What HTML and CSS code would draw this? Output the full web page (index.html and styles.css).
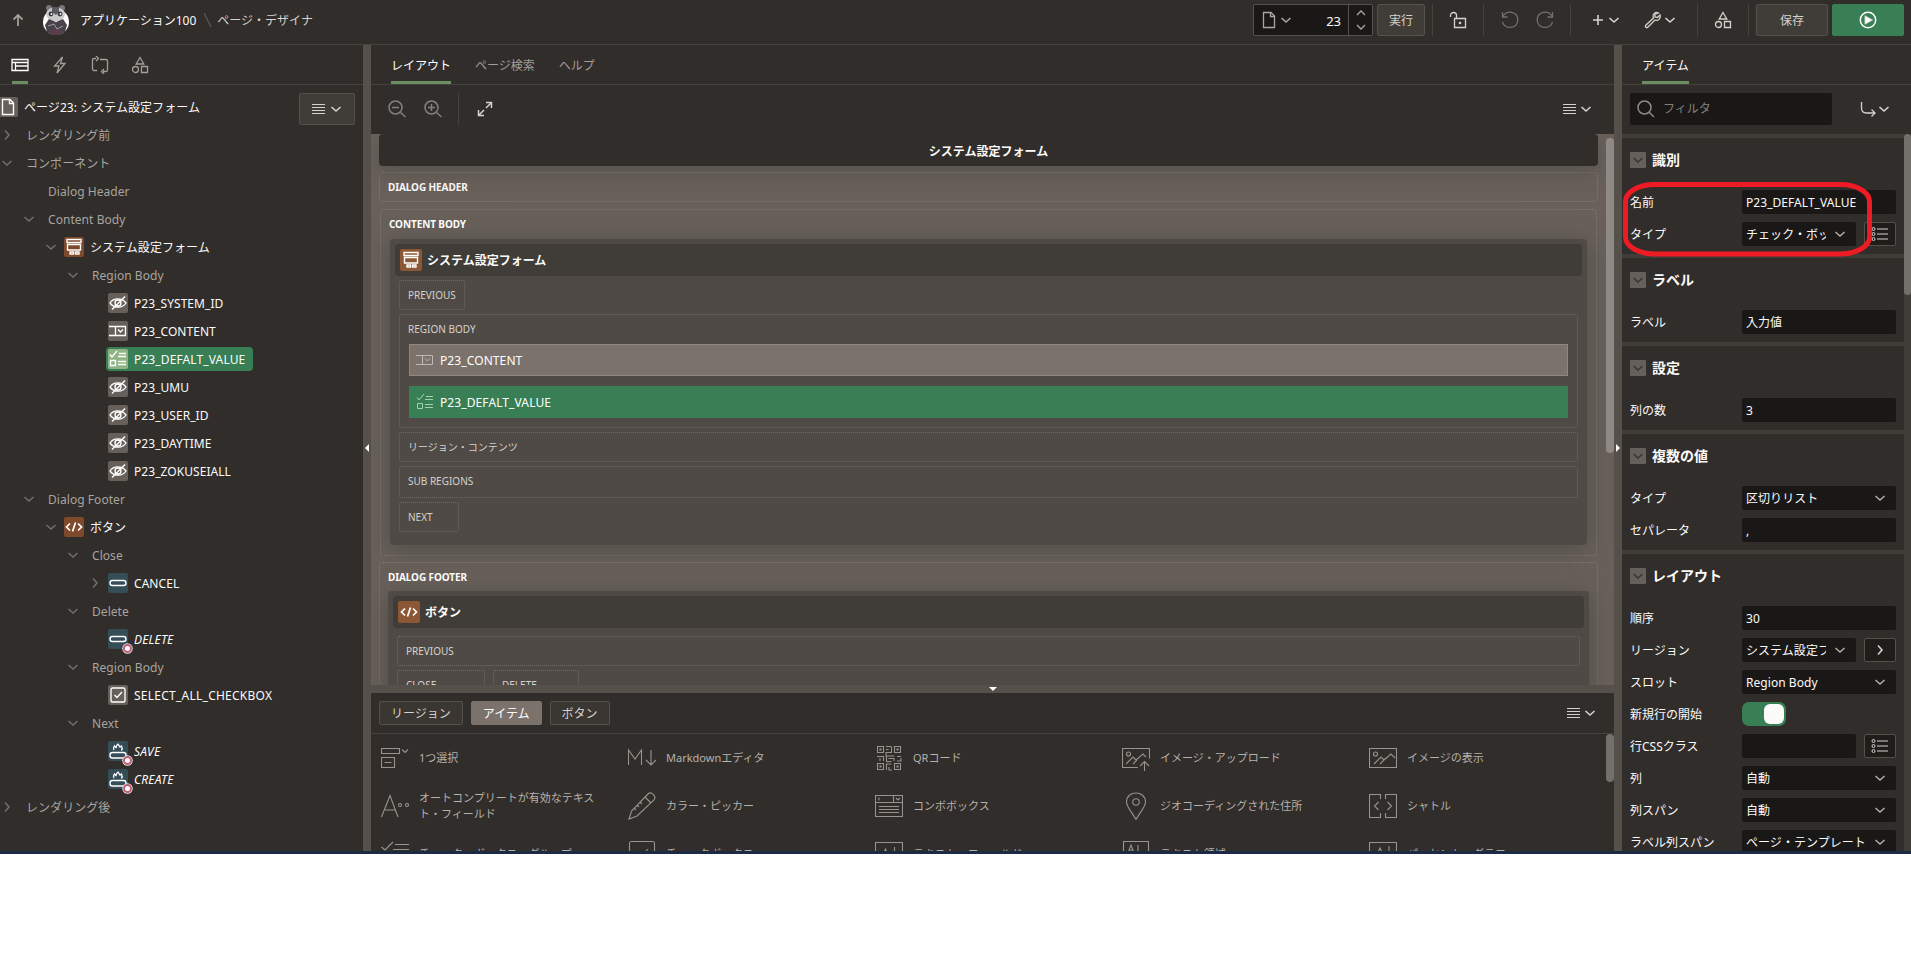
FILE: index.html
```html
<!DOCTYPE html>
<html lang="ja">
<head>
<meta charset="utf-8">
<title>ページ・デザイナ</title>
<link rel="stylesheet" href="styles.css">
</head>
<body>
<svg class="defs" width="0" height="0">
  <symbol id="chev" viewBox="0 0 12 12"><path d="M1.500 4 6 8l4.500-4"/></symbol>
  <symbol id="chevr" viewBox="0 0 12 12"><path d="M4 1.500 8 6l-4 4.500"/></symbol>
  <symbol id="menu" viewBox="0 0 14 12"><path d="M0 1.500h13M0 4.500h13M0 7.500h13M0 10.500h13"/></symbol>
  <symbol id="shapes" viewBox="0 0 18 18"><path d="M9 1.500 12.800 8H5.200zM10.500 10.500h6v6h-6z"/><circle cx="4.500" cy="13.500" r="3"/></symbol>
  <symbol id="page" viewBox="0 0 14 18"><path d="M1.500 1.500h7.500l3.500 3.500v11.500h-11zM8.500 1.500v4h4"/></symbol>
  <symbol id="form" viewBox="0 0 18 18"><path d="M2 1.500h14v3H2zM2.500 6.500h13v5.500h-13zM5 14h3.500v2H5zM10.500 14H14v2h-3.500z"/></symbol>
  <symbol id="hide" viewBox="0 0 18 18"><path d="M1 9c3.500-5.500 12-5.500 16 0-3.500 5.500-12 5.500-16 0zM3 15.500 16 2.500"/><circle cx="9" cy="9" r="3"/></symbol>
  <symbol id="select" viewBox="0 0 18 18"><path d="M0 4.500h16.500v9H0M6.500 4.500v9M9 7.500l2.500 2.500 2.500-2.500"/></symbol>
  <symbol id="checks" viewBox="0 0 18 18"><path d="M1 4.500l2 2.500 5-6M10 3.500h7M9 6.500h8M1.500 10.500h5v5h-5zM9 11.500h8M9 14.500h8"/></symbol>
  <symbol id="code" viewBox="0 0 18 18"><path d="M5 5.500 1.500 9 5 12.500M13 5.500 16.500 9 13 12.500M10.500 4.500 7.500 13.500"/></symbol>
  <symbol id="btn" viewBox="0 0 18 18"><rect x="1" y="6.500" width="16" height="5" rx="2.500"/></symbol>
  <symbol id="hot" viewBox="0 0 18 18"><rect x="1" y="10.500" width="16" height="5.500" rx="2.500"/><path d="M5 8c-1.500-2 0-3 .5-4l1.500 1.500C7.500 4 8 2.500 9 2l2 3 1.500-1c1 2 1 3 0 4.500"/></symbol>
  <symbol id="cbox" viewBox="0 0 18 18"><rect x="2" y="2" width="14" height="14" rx="1.500"/><path d="M5.500 9l2.500 2.500 5-5.500"/></symbol>
  <symbol id="list" viewBox="0 0 18 16"><path d="M6 3h11M6 8h11M6 13h11"/><circle cx="2.500" cy="3" r="1.500"/><circle cx="2.500" cy="8" r="1.500"/><circle cx="2.500" cy="13" r="1.500"/></symbol>
  <symbol id="pic" viewBox="0 0 28 28"><path d="M.5 4.500h27v19H.5zM5 20l7-7 3 3 7-6 4 4M11 20l6-6"/><circle cx="6.500" cy="10" r="2"/></symbol>
</svg>
<div class="app">
  <header class="topbar">
    <svg class="i up" viewBox="0 0 12 14"><path d="M6 13V2M1.500 6.500 6 2l4.500 4.500"/></svg>
    <svg class="avatar" viewBox="0 0 28 32"><circle cx="14" cy="18" r="13" fill="#fff"/><circle cx="7" cy="4" r="3" fill="#77747a"/><circle cx="20" cy="4" r="3" fill="#77747a"/><path d="M4 10C5 1 22 1 23 10c-1 5-4 7-9 7s-9-2-10-7z" fill="#c9c8cb"/><path d="M10 3h7v5l-3 3-4-3z" fill="#5c595f"/><circle cx="9" cy="10" r="2.400" fill="#3c393f"/><circle cx="18" cy="10" r="2.400" fill="#3c393f"/><circle cx="9.500" cy="10" r=".9" fill="#fff"/><circle cx="18.500" cy="10" r=".9" fill="#fff"/><path d="M7 15l7 3 7-3 4 6-2 7-5 3h-8l-5-3-2-7z" fill="#48434a"/><path d="M9 26h11l-1 4h-9z" fill="#5d3d49"/><path d="M6 22l6-2 3 5 6-3" fill="none" stroke="#a19da4"/></svg>
    <span class="crumb">アプリケーション100</span><svg class="slash" viewBox="0 0 9 16"><path d="M1 1l7 14"/></svg><span class="crumb dim">ページ・デザイナ</span>
    <div class="tools">
      <div class="pagesel"><svg class="i w14" viewBox="0 0 14 18"><use href="#page"/></svg><svg class="i c12" viewBox="0 0 12 12"><use href="#chev"/></svg><b>23</b><span class="spin"><svg class="i" viewBox="0 0 12 12"><path d="M2 8l4-4 4 4"/></svg><svg class="i" viewBox="0 0 12 12"><path d="M2 4l4 4 4-4"/></svg></span></div>
      <div class="tbtn run">実行</div>
      <i class="vs"></i>
      <div class="slot lock"><svg class="i s18" viewBox="0 0 18 18"><path d="M1.500 6V4.500c0-4 6-4 6 0V7M5.500 7.500h11v9h-11z"/><path d="M10.500 11.500h1v1h-1z"/></svg></div>
      <i class="vs"></i>
      <div class="slot undo"><svg class="i s18" viewBox="0 0 18 18"><path d="M1.500 1v5h5M1.800 5.500C6-2 17 1 16.800 9.300 16 18.500 3.500 18.500 1.500 11"/></svg><svg class="i s18 flip" viewBox="0 0 18 18"><path d="M1.500 1v5h5M1.800 5.500C6-2 17 1 16.800 9.300 16 18.500 3.500 18.500 1.500 11"/></svg></div>
      <i class="vs"></i>
      <div class="slot menus"><svg class="i plus" viewBox="0 0 12 12"><path d="M6 1v10M1 6h10"/></svg><svg class="i c12" viewBox="0 0 12 12"><use href="#chev"/></svg><svg class="i s18 wrench" viewBox="0 0 18 18"><path d="M14.500 2C11 0 8 4 9.500 7L2 14c-1.500 2 .5 3.500 2 2l7-7c3 1.500 6-1.500 5-5l-2.500 2.500-2.500-.5V3.500z"/></svg><svg class="i c12" viewBox="0 0 12 12"><use href="#chev"/></svg></div>
      <i class="vs"></i>
      <div class="slot shp"><svg class="i s18" viewBox="0 0 18 18"><use href="#shapes"/></svg></div>
      <i class="vs"></i>
      <div class="tbtn save">保存</div>
      <div class="tbtn go"><svg viewBox="0 0 18 18"><circle cx="9" cy="9" r="7.700" fill="none" stroke="#fff" stroke-width="1.500"/><path d="M6 4.800 13.500 9 6 13.200z" fill="#fff"/></svg></div>
    </div>
  </header>
  <div class="body">
    <aside class="left">
      <nav class="tabs icons">
        <span class="tab on"><svg class="i" viewBox="0 0 18 18"><path d="M1 3.500h16v11H1zM1 6.500h16M4.500 6.500v8M4.500 10h12.500"/></svg></span>
        <span class="tab"><svg class="i" viewBox="0 0 18 18"><path d="M11.500 1 3.500 10h4.500l-2 7 8-9.500H9.500z"/></svg></span>
        <span class="tab"><svg class="i" viewBox="0 0 18 18"><path d="M5 2.500H3c-1 0-1.500.5-1.500 1.500v9c0 1 .5 1.500 1.500 1.500h3M5 0l2.500 2.500L5 5M9 3.500h6c1 0 1.500.500 1.500 1.500v9c0 1-.5 1.500-1.500 1.500h-3M13 13l-2.500 2.500L13 18"/></svg></span>
        <span class="tab"><svg class="i" viewBox="0 0 18 18"><use href="#shapes"/></svg></span>
      </nav>
      <div class="tree">
        <div class="row root"><span class="ic"><svg viewBox="0 0 14 18"><use href="#page"/></svg></span><em>ページ23: システム設定フォーム</em></div>
        <div class="row dim l0"><svg class="ch" viewBox="0 0 12 12"><use href="#chevr"/></svg><em>レンダリング前</em></div>
        <div class="row dim l0"><svg class="ch" viewBox="0 0 12 12"><use href="#chev"/></svg><em>コンポーネント</em></div>
        <div class="row dim l1"><span class="ch"></span><em>Dialog Header</em></div>
        <div class="row dim l1"><svg class="ch" viewBox="0 0 12 12"><use href="#chev"/></svg><em>Content Body</em></div>
        <div class="row l2"><svg class="ch" viewBox="0 0 12 12"><use href="#chev"/></svg><span class="ic or"><svg viewBox="0 0 18 18"><use href="#form"/></svg></span><em>システム設定フォーム</em></div>
        <div class="row dim l3"><svg class="ch" viewBox="0 0 12 12"><use href="#chev"/></svg><em>Region Body</em></div>
        <div class="row l4"><span class="ch"></span><span class="ic"><svg viewBox="0 0 18 18"><use href="#hide"/></svg></span><em>P23_SYSTEM_ID</em></div>
        <div class="row l4"><span class="ch"></span><span class="ic"><svg viewBox="0 0 18 18"><use href="#select"/></svg></span><em>P23_CONTENT</em></div>
        <div class="row l4"><span class="ch"></span><span class="sel"><span class="ic gr"><svg viewBox="0 0 18 18"><use href="#checks"/></svg></span><em>P23_DEFALT_VALUE</em></span></div>
        <div class="row l4"><span class="ch"></span><span class="ic"><svg viewBox="0 0 18 18"><use href="#hide"/></svg></span><em>P23_UMU</em></div>
        <div class="row l4"><span class="ch"></span><span class="ic"><svg viewBox="0 0 18 18"><use href="#hide"/></svg></span><em>P23_USER_ID</em></div>
        <div class="row l4"><span class="ch"></span><span class="ic"><svg viewBox="0 0 18 18"><use href="#hide"/></svg></span><em>P23_DAYTIME</em></div>
        <div class="row l4"><span class="ch"></span><span class="ic"><svg viewBox="0 0 18 18"><use href="#hide"/></svg></span><em>P23_ZOKUSEIALL</em></div>
        <div class="row dim l1"><svg class="ch" viewBox="0 0 12 12"><use href="#chev"/></svg><em>Dialog Footer</em></div>
        <div class="row l2"><svg class="ch" viewBox="0 0 12 12"><use href="#chev"/></svg><span class="ic or thick"><svg viewBox="0 0 18 18"><use href="#code"/></svg></span><em>ボタン</em></div>
        <div class="row dim l3"><svg class="ch" viewBox="0 0 12 12"><use href="#chev"/></svg><em>Close</em></div>
        <div class="row l4"><svg class="ch" viewBox="0 0 12 12"><use href="#chevr"/></svg><span class="ic bl"><svg viewBox="0 0 18 18"><use href="#btn"/></svg></span><em>CANCEL</em></div>
        <div class="row dim l3"><svg class="ch" viewBox="0 0 12 12"><use href="#chev"/></svg><em>Delete</em></div>
        <div class="row l4 it"><span class="ch"></span><span class="ic bl"><svg viewBox="0 0 18 18"><use href="#btn"/></svg><i class="dot"></i></span><em>DELETE</em></div>
        <div class="row dim l3"><svg class="ch" viewBox="0 0 12 12"><use href="#chev"/></svg><em>Region Body</em></div>
        <div class="row l4 wide"><span class="ch"></span><span class="ic"><svg viewBox="0 0 18 18"><use href="#cbox"/></svg></span><em>SELECT_ALL_CHECKBOX</em></div>
        <div class="row dim l3"><svg class="ch" viewBox="0 0 12 12"><use href="#chev"/></svg><em>Next</em></div>
        <div class="row l4 it"><span class="ch"></span><span class="ic bl"><svg viewBox="0 0 18 18"><use href="#hot"/></svg><i class="dot"></i></span><em>SAVE</em></div>
        <div class="row l4 it"><span class="ch"></span><span class="ic bl"><svg viewBox="0 0 18 18"><use href="#hot"/></svg><i class="dot"></i></span><em>CREATE</em></div>
        <div class="row dim l0"><svg class="ch" viewBox="0 0 12 12"><use href="#chevr"/></svg><em>レンダリング後</em></div>
        <div class="treemenu"><svg class="i m14" viewBox="0 0 14 12"><use href="#menu"/></svg><svg class="i c12" viewBox="0 0 12 12"><use href="#chev"/></svg></div>
      </div>
    </aside>
    <div class="split v"><svg viewBox="0 0 4 8"><path d="M4 0v8L0 4z"/></svg></div>
    <main class="center">
      <nav class="tabs text"><span class="tab on">レイアウト</span><span class="tab">ページ検索</span><span class="tab">ヘルプ</span></nav>
      <div class="toolbar">
        <svg class="i s18 fade" viewBox="0 0 18 18"><circle cx="7.500" cy="7.500" r="6.500"/><path d="M4 7.500h7M12.500 12.500l5 4.500"/></svg>
        <svg class="i s18 fade z2" viewBox="0 0 18 18"><circle cx="7.500" cy="7.500" r="6.500"/><path d="M4 7.500h7M7.500 4v7M12.500 12.500l5 4.500"/></svg>
        <i class="vs"></i>
        <svg class="i s16" viewBox="0 0 16 16"><path d="M9 1.500h5.500V7M14.500 1.500 9 7M1.500 9v5.500H7M1.500 14.500 7 9"/></svg>
        <span class="mm"><svg class="i m14" viewBox="0 0 14 12"><use href="#menu"/></svg><svg class="i c12" viewBox="0 0 12 12"><use href="#chev"/></svg></span>
      </div>
      <div class="canvas">
        <div class="title">システム設定フォーム</div>
        <section class="box hd"><h4>DIALOG HEADER</h4></section>
        <section class="box cb"><h4>CONTENT BODY</h4>
          <div class="card">
            <div class="chead"><span class="ic big"><svg viewBox="0 0 18 18"><use href="#form"/></svg></span><em>システム設定フォーム</em></div>
            <div class="pos prev">PREVIOUS</div>
            <div class="pos rb"><span>REGION BODY</span>
              <div class="item"><svg viewBox="0 0 18 18"><use href="#select"/></svg>P23_CONTENT</div>
              <div class="item on"><svg viewBox="0 0 18 18"><use href="#checks"/></svg>P23_DEFALT_VALUE</div>
            </div>
            <div class="pos">リージョン・コンテンツ</div>
            <div class="pos sub">SUB REGIONS</div>
            <div class="pos next">NEXT</div>
          </div>
        </section>
        <section class="box ft"><h4>DIALOG FOOTER</h4>
          <div class="card">
            <div class="chead"><span class="ic big thick"><svg viewBox="0 0 18 18"><use href="#code"/></svg></span><em>ボタン</em></div>
            <div class="pos">PREVIOUS</div>
            <div class="pair"><div class="pos a">CLOSE</div><div class="pos b">DELETE</div></div>
          </div>
        </section>
        <div class="thumb"></div>
      </div>
      <div class="split h"><svg viewBox="0 0 8 4"><path d="M0 0h8L4 4z"/></svg></div>
      <section class="gallery">
        <div class="gbar"><span class="gb">リージョン</span><span class="gb on">アイテム</span><span class="gb">ボタン</span><span class="mm"><svg class="i m14" viewBox="0 0 14 12"><use href="#menu"/></svg><svg class="i c12" viewBox="0 0 12 12"><use href="#chev"/></svg></span></div>
        <div class="grid">
          <div><svg viewBox="0 0 28 28"><path d="M.5 4.500h18v5H.5zM.5 13.500h13v10H.5zM3.500 18.500h7M21 5.500l3 3 3-3"/></svg><p>1つ選択</p></div>
          <div><svg viewBox="0 0 28 28"><path d="M.5 21V6l6.500 9 6.500-9v15M23 6v15M18 16l5 5 5-5"/></svg><p>Markdownエディタ</p></div>
          <div><svg viewBox="0 0 28 28"><path d="M2.500 2.500h6v6h-6zM19.500 2.500h6v6h-6zM2.500 19.500h6v6h-6zM5 5h1v1H5zM22 5h1v1h-1zM5 22h1v1H5zM11 2.500h5M11 5.500h2.500M16.500 2.500v6H11v3.500h8.500M2 12.500h6.500V17M5 14v3M11.500 12v5.500h5M13.500 14.500H19V17M22 12.500h4M22 17h4V14M11.500 26v-6h5M14 23v3h3M19.500 19.500h6v6h-6zM22 22h1v1h-1z"/></svg><p>QRコード</p></div>
          <div><svg viewBox="0 0 28 28"><path d="M16 23.500H.5v-19h27v10M4 20l7-7 3 3 7-6 3 3M11 20l4-4M22.500 27v-9M18 22l4.500-4.500L27 22"/><circle cx="6.500" cy="10" r="2"/></svg><p>イメージ・アップロード</p></div>
          <div><svg viewBox="0 0 28 28"><use href="#pic"/></svg><p>イメージの表示</p></div>
          <div><svg viewBox="0 0 28 28"><path d="M.5 25 9 3.500 17 25M4 18h10"/><circle cx="19" cy="13" r="1.500"/><circle cx="26" cy="13" r="1.500"/></svg><p>オートコンプリートが有効なテキスト・フィールド</p></div>
          <div><svg viewBox="0 0 28 28"><path d="M1 27l2.500-8L20 2c3-3 9 2 6 6L9 24zM17 5l6 6M6 16l2 2M9 13l2 2M12 10l2 2"/></svg><p>カラー・ピッカー</p></div>
          <div><svg viewBox="0 0 28 28"><path d="M.5 3.500h27v21H.5zM.5 10.500h27M18.500 3.500v7M4 5.500v3M21 6l2 2 2-2M4 14.500h20M4 17.500h20M4 20.500h20"/></svg><p>コンボボックス</p></div>
          <div><svg viewBox="0 0 28 28"><path d="M14 27.500C10 20 4.500 15 4.500 10c0-12 19-12 19 0 0 5-5.500 10-9.500 17.500z"/><circle cx="14" cy="10" r="3.200"/></svg><p>ジオコーディングされた住所</p></div>
          <div><svg viewBox="0 0 28 28"><path d="M11.500 7V2.500H.5v23h11V21M16.500 7V2.500h11v23h-11V21M9.500 10l-4 4 4 4M18.500 10l4 4-4 4"/></svg><p>シャトル</p></div>
          <div><svg viewBox="0 0 28 28"><path d="M.5 7 4 10l8-8M14 4.500h14M12 9.500h16M.5 15h9v9h-9z"/></svg><p>チェック・ボックス・グループ</p></div>
          <div><svg viewBox="0 0 28 28"><rect x="1.500" y="1.500" width="25" height="25" rx="2"/><path d="M8 14l4 4 8-9"/></svg><p>チェックボックス</p></div>
          <div><svg viewBox="0 0 28 28"><path d="M.5 2.500h27v22H.5zM7 17l3.500-8 3.500 8M19.500 7v11"/></svg><p>テキスト・フィールド</p></div>
          <div><svg viewBox="0 0 28 28"><path d="M1.500 1.500h25v25h-25zM6 13l3-8 3 8M7 10h4M16 5v8"/></svg><p>テキスト領域</p></div>
          <div><svg viewBox="0 0 28 28"><path d="M.5 2.500h27v24H.5zM8 14l3-6 3 6M20 6v9"/></svg><p>パーセント・グラフ</p></div>
        </div>
        <div class="thumb"></div>
      </section>
    </main>
    <div class="split v"><svg viewBox="0 0 4 8"><path d="M0 0v8l4-4z"/></svg></div>
    <aside class="right">
      <nav class="tabs text"><span class="tab on">アイテム</span></nav>
      <div class="fbar"><div class="filter"><svg class="i s18" viewBox="0 0 18 18"><circle cx="7.500" cy="7.500" r="6.500"/><path d="M12 12l5 5"/></svg>フィルタ</div><svg class="i s16 goto" viewBox="0 0 16 16"><path d="M1.500 1v6c0 3 1.500 5 5 5H15M11.500 8.500 15 12l-3.500 3.500"/></svg><svg class="i c12" viewBox="0 0 12 12"><use href="#chev"/></svg></div>
      <div class="props">
        <div class="grp"><h3><i><svg class="c12" viewBox="0 0 12 12"><use href="#chev"/></svg></i>識別</h3>
          <div class="f"><label>名前</label><span class="in"><u>P23_DEFALT_VALUE</u></span></div>
          <div class="f"><label>タイプ</label><span class="in dd"><u>チェック・ボックス・グループ</u><svg class="c12" viewBox="0 0 12 12"><use href="#chev"/></svg></span><span class="ib"><svg viewBox="0 0 18 16"><use href="#list"/></svg></span></div></div>
        <div class="grp"><h3><i><svg class="c12" viewBox="0 0 12 12"><use href="#chev"/></svg></i>ラベル</h3>
          <div class="f"><label>ラベル</label><span class="in"><u>入力値</u></span></div></div>
        <div class="grp"><h3><i><svg class="c12" viewBox="0 0 12 12"><use href="#chev"/></svg></i>設定</h3>
          <div class="f"><label>列の数</label><span class="in"><u>3</u></span></div></div>
        <div class="grp"><h3><i><svg class="c12" viewBox="0 0 12 12"><use href="#chev"/></svg></i>複数の値</h3>
          <div class="f"><label>タイプ</label><span class="in dd"><u>区切りリスト</u><svg class="c12" viewBox="0 0 12 12"><use href="#chev"/></svg></span></div>
          <div class="f"><label>セパレータ</label><span class="in"><u>,</u></span></div></div>
        <div class="grp"><h3><i><svg class="c12" viewBox="0 0 12 12"><use href="#chev"/></svg></i>レイアウト</h3>
          <div class="f"><label>順序</label><span class="in"><u>30</u></span></div>
          <div class="f"><label>リージョン</label><span class="in dd"><u>システム設定フォーム</u><svg class="c12" viewBox="0 0 12 12"><use href="#chev"/></svg></span><span class="ib"><svg class="c12" viewBox="0 0 12 12"><use href="#chevr"/></svg></span></div>
          <div class="f"><label>スロット</label><span class="in dd"><u>Region Body</u><svg class="c12" viewBox="0 0 12 12"><use href="#chev"/></svg></span></div>
          <div class="f"><label>新規行の開始</label><span class="toggle"></span></div>
          <div class="f"><label>行CSSクラス</label><span class="in"></span><span class="ib"><svg viewBox="0 0 18 16"><use href="#list"/></svg></span></div>
          <div class="f"><label>列</label><span class="in dd"><u>自動</u><svg class="c12" viewBox="0 0 12 12"><use href="#chev"/></svg></span></div>
          <div class="f"><label>列スパン</label><span class="in dd"><u>自動</u><svg class="c12" viewBox="0 0 12 12"><use href="#chev"/></svg></span></div>
          <div class="f"><label>ラベル列スパン</label><span class="in dd"><u>ページ・テンプレート</u><svg class="c12" viewBox="0 0 12 12"><use href="#chev"/></svg></span></div></div>
        <div class="thumb"></div>
      </div>
    </aside>
  </div>
</div>
<svg class="ring" viewBox="0 0 250 75"><rect x="2.500" y="2.500" width="244" height="69.500" rx="29" ry="17"/></svg>
</body>
</html>
```

FILE: styles.css
```css
*{box-sizing:border-box}
body{margin:0;background:#fff;color:#fcfbfa;font:12px/16px "Noto Sans","Noto Sans CJK JP",sans-serif;overflow:hidden}
.defs{position:absolute}
svg{fill:none;stroke:currentColor;flex:none;display:block}
em,i{font-style:normal}
.app{height:854px;background:#312d2a;border-bottom:3px solid #1c2a45;display:flex;flex-direction:column}
.i{color:#d5d2ce;stroke-width:1.300}
.c12{width:12px;height:12px;stroke-width:1.600}
.m14{width:14px;height:12px;stroke-width:1}
.s18{width:18px;height:18px}.s16{width:16px;height:16px}.w14{width:14px;height:18px}

/* top bar */
.topbar{height:45px;flex:none;border-bottom:1px solid #45413d;display:flex;align-items:flex-start;padding:4px 7px 0 12px}
.up{width:12px;height:14px;margin-top:9px;stroke-width:1.800;color:#a39e9a}
.avatar{width:28px;height:32px;margin-left:18px;stroke:none}
.crumb{margin:9px 0 0 10px;white-space:nowrap}
.crumb.dim{margin-left:5px;color:#d5d2ce}
.slash{width:9px;height:16px;margin:8px 0 0 7px;color:#6b6662}
.tools{margin-left:auto;display:flex;height:32px}
.pagesel{width:120px;height:32px;background:#1a1816;border:1px solid #55504a;border-radius:2px;display:flex;align-items:center;padding-left:8px;margin-right:4px}
.pagesel .i{color:#a8a49f}
.pagesel .c12{margin-left:4px}
.pagesel b{font-weight:400;font-size:13px;margin-left:auto;margin-right:7px;padding-top:1px}
.spin{width:24px;height:30px;border-left:1px solid #55504a;display:flex;flex-direction:column;align-items:center;justify-content:space-between;padding:2px 0}
.spin svg{width:12px;height:12px}
.tbtn{border:1px solid #55504a;background:#403c38;border-radius:2px;display:flex;align-items:center;justify-content:center;color:#d5d2ce}
.run,.save{padding-top:1px}
.run{width:48px;margin-right:7px}
.save{width:72px;margin:0 4px 0 7px}
.go{width:72px;background:#397f55;border-color:#397f55}
.go svg{width:18px;height:18px}
.vs{width:1px;height:32px;background:#45413d;flex:none}
.slot{display:flex;align-items:center;justify-content:center}
.lock{width:50px}
.undo{width:86px;gap:17px}.undo .i{color:#73706b}
.flip{transform:scaleX(-1)}
.menus{width:126px;gap:4px}.plus{width:12px;height:12px;stroke-width:1.600}
.wrench{margin-left:20px;margin-right:-2px}
.shp{width:50px}

.body{flex:1;display:flex;min-height:0}
.split{background:#55504a;flex:none;display:flex;align-items:center;justify-content:center}
.split svg{fill:#fff;stroke:none}
.split.v{width:8px}.split.v svg{width:4px;height:8px}
.split.h{height:8px}.split.h svg{width:8px;height:4px}
.tabs{height:40px;border-bottom:1px solid #45413d;display:flex;flex:none;gap:24px;padding-left:20px;color:#a39e9a}
.tab{height:39px;display:flex;align-items:center;padding-top:5px;border-bottom:3px solid transparent}
.tab.on{color:#fff;border-color:#6b8e63}
.tabs.icons{padding-left:12px}
.icons .tab{width:16px;justify-content:center;padding-top:4px}
.icons svg{width:18px;height:18px;color:#a39e9a}
.icons .on svg{color:#fff}

/* tree */
.left{width:363px;flex:none}
.tree{position:relative;padding-top:8px}
.row{height:28px;display:flex;align-items:center;white-space:nowrap}
.row em{padding-top:2px;letter-spacing:.05px}
.row.dim{color:#a8a49f}
.row .ch{width:12px;height:12px;margin:0 7px 0 1px;color:#73706b;stroke-width:1.500;flex:none}
.row.dim em{margin-left:6px}
.row.it em{font-style:italic;letter-spacing:.2px}
.row.wide em{letter-spacing:.25px}
.l1{padding-left:22px}.l2{padding-left:44px}.l3{padding-left:66px}.l4{padding-left:88px}
.ic{position:relative;width:20px;height:20px;background:#67605a;border-radius:2px;display:flex;align-items:center;justify-content:center;margin-right:6px;flex:none}
.ic svg{width:18px;height:18px;color:#fff;stroke-width:1.350}
.ic.thick svg{stroke-width:1.700}
.root .ic{margin-left:-2px}
.ic.or{background:#7f4a2c}
.ic.bl{background:#344d56}
.ic.gr{background:#8fb586}
.sel{height:24px;background:#397f55;border-radius:4px;display:flex;align-items:center;padding:0 8px 0 2px;margin-left:-2px}
.sel em{letter-spacing:.12px}
.dot{position:absolute;right:-4px;bottom:-4px;width:9px;height:9px;border-radius:50%;background:#fff;border:2.500px solid #bf5f75;box-shadow:0 0 0 .7px #f1e6e8}
.treemenu{position:absolute;right:8px;top:8px;width:56px;height:32px;border:1px solid #55504a;background:#403c38;border-radius:2px;display:flex;align-items:center;justify-content:center;gap:4px}

/* layout canvas */
.center{width:1243px;flex:none;display:flex;flex-direction:column}
.toolbar{height:49px;flex:none;display:flex;align-items:center;padding:0 22px 1px 17px}
.fade{color:#85807b;stroke-width:1.500}.z2{margin:0 16px 0 18px}
.toolbar .s16{margin-left:18px;stroke-width:1.500}
.mm{margin-left:auto;display:flex;gap:3px;align-items:center}
.canvas{position:relative;height:551px;flex:none;overflow:hidden;background:#69605a;padding:0 16px 0 8px}
.title{position:relative;height:32px;background:#312d2a;border-radius:4px;text-align:center;font-weight:600;line-height:35px;box-shadow:0 8px 18px rgba(60,66,58,.35)}
.box{border:1px dotted #827b75;border-radius:4px;padding:0 8px}
.box h4{margin:0;font-size:10px;line-height:28px;font-weight:700;letter-spacing:-.1px}
.hd{height:30px;margin-top:6px}
.cb{height:347px;margin:7px 1px 0}
.card{background:#4f4a45;border-radius:4px;padding:5px;box-shadow:0 4px 24px rgba(60,66,58,.6)}
.cb .card{height:306px;margin:1px 1px 0}
.chead{height:32px;background:#403c38;border-radius:4px;display:flex;align-items:center;font-weight:600;padding-left:5px;margin-bottom:4px}
.chead em{padding-top:2px}
.big{width:22px;height:22px;background:#8b5735;margin-right:5px}
.pos{margin:0 4px 4px;height:30px;border:1px dotted #6e6963;border-radius:2px;padding:0 8px;font-size:10px;line-height:29px;color:#d5d2ce}
.prev{width:66px}.next{width:60px}.sub{height:32px}
.pos.rb{height:114px;padding:0 9px}
.pos.rb span{margin-left:-1px}
.item{height:32px;margin-bottom:10px;background:#7b726c;border:1px solid #8f8780;display:flex;align-items:center;color:#fff;font-size:12px;letter-spacing:.1px;gap:6px;padding-left:6px}
.item svg{width:18px;height:18px;color:#bdb8b3}
.item.on{background:#397f55;border-color:#397f55}.item.on svg{color:#a5d0b4}
.ft{height:300px;margin-top:6px}
.ft .card{height:280px}
.ft .chead{margin-bottom:8px}
.pair{display:flex;margin:0 4px;gap:8px}.pair .pos{margin:0}.a{width:88px}.b{width:86px}
.thumb{position:absolute;right:0;width:8px;border-radius:4px;background:#8f8a85}
.canvas .thumb{top:4px;height:315px}

/* component gallery */
.gallery{position:relative;flex:1;min-height:0;overflow:hidden}
.gbar{height:41px;border-bottom:1px solid #45413d;display:flex;align-items:center;gap:8px;padding:0 13px 0 8px}
.gb{height:24px;line-height:24px;border:1px solid #55504a;background:#3a3632;border-radius:2px;padding:0 11px;color:#d5d2ce}
.gb.on{background:#7b726c;border-color:#7b726c;color:#fff}
.gbar .mm{margin-right:5px}
.grid{display:grid;grid-template-columns:repeat(5,247px);grid-auto-rows:48px;font-size:11px;color:#b5b1ac}
.grid div{display:flex;align-items:center;padding:0 15px 0 10px;gap:10px}
.grid p{margin:0;width:180px;word-break:break-all}
.grid svg{width:28px;height:28px;color:#98938e;stroke-width:1.100}
.gallery .thumb{top:41px;height:48px;background:#73706b}

/* property editor */
.right{flex:1;min-width:0;display:flex;flex-direction:column}
.fbar{height:49px;flex:none;display:flex;align-items:center;padding:0 0 1px 8px}
.filter{width:202px;height:32px;background:#1a1816;border-radius:2px;display:flex;align-items:center;gap:8px;padding-left:7px;color:#85807b}
.filter .i{color:#8f8a85;stroke-width:1.500}
.goto{margin:0 2px 0 28px}
.props{position:relative;flex:1;min-height:0;overflow:hidden;background:#403c38;padding-right:7px}
.props .thumb{top:0;width:7px;height:161px;background:#73706b}
.grp{background:#312d2a;margin-top:4px;padding:14px 8px 8px}
.grp h3{margin:0;height:38px;display:flex;align-items:flex-start;font-size:14px;font-weight:600;line-height:16px}
.grp h3 i{width:16px;height:16px;background:#67605a;color:#38342f;border-radius:1px;margin-right:6px;display:flex;align-items:center;justify-content:center}
.f{display:flex;height:24px;align-items:center}
.f+.f{margin-top:8px}
.f label{width:112px;flex:none;white-space:nowrap;padding-top:2px}
.in{flex:1;min-width:0;height:24px;background:#1a1816;border-radius:2px;padding-left:4px;display:flex;align-items:center}
.in u{text-decoration:none;overflow:hidden;white-space:nowrap;flex:1;padding-top:2px;letter-spacing:.05px}
.dd{padding-right:10px}
.in svg{color:#b5b1ac;stroke-width:1.400;margin-left:8px}
.ib{width:32px;height:24px;margin-left:8px;border:1px solid #55504a;background:#1f1c1a;border-radius:2px;display:flex;align-items:center;justify-content:center;color:#d5d2ce}
.ib svg{width:18px;height:16px}.ib .c12{width:12px;height:12px}
.toggle{width:44px;height:24px;border-radius:7px;background:#397f55;padding:2px;display:flex;justify-content:flex-end}
.toggle::after{content:"";width:20px;height:20px;border-radius:6px;background:#fcfbfa}
.ring{position:absolute;left:1623px;top:182px;width:250px;height:75px;stroke:#ed1c24;stroke-width:5}
```
